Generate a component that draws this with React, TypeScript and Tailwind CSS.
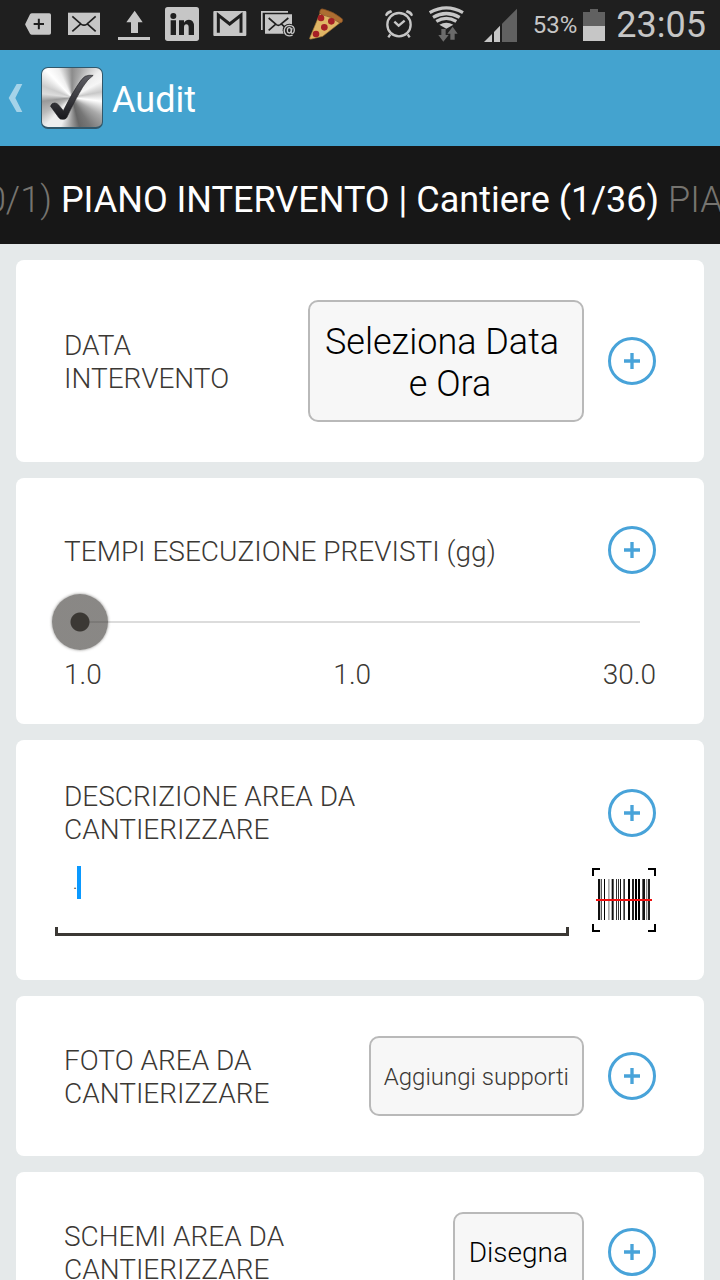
import React, { useState } from "react";

type IconProps = { x: number; children: React.ReactNode };

/* One cell of the status bar; drawings use a grid three times finer than the cell. */
function StatusIcon({ x, children }: IconProps) {
  return (
    <svg viewBox={`${x * 3} 0 144 150`} className="h-[50px] w-12 shrink-0" fill="#c6c6c6" aria-hidden="true">
      {children}
    </svg>
  );
}

function StatusBar() {
  return (
    <div className="flex h-[50px] shrink-0 items-center justify-between bg-[#1f1f1f] px-[14px] text-[#c6c6c6]">
      <div className="flex">
        <StatusIcon x={14}>
          <path d="M96 40h52q5 0 5 5v54q0 5-5 5H96q-4 0-6-3L76 75q-1-2 0-4l14-28q2-3 6-3z" />
          <path d="M101 72h31M116.500 56v32" stroke="#1f1f1f" strokeWidth="6" fill="none" />
        </StatusIcon>
        <StatusIcon x={62}>
          <path d="M204 38h96v67h-96z" />
          <path d="M217 49l27 24q8 5 16 0l27-24M217 94l27-24M287 94l-27-24" stroke="#1f1f1f" strokeWidth="5" fill="none" />
        </StatusIcon>
        <StatusIcon x={110}>
          <path d="M404 32l24 35h-14v32h-21V67h-14zM354 111h96v9h-96z" />
        </StatusIcon>
        <StatusIcon x={158}>
          <rect x="495" y="21" width="102" height="102" rx="8" />
          <circle cx="520" cy="48" r="9" fill="#1f1f1f" />
          <path d="M512 61h16v44h-16zM537 61h15v7q5-9 15-9 15 0 15 20v26h-16V82q0-9-7-9-7 0-7 9v23h-15z" fill="#1f1f1f" />
        </StatusIcon>
        <StatusIcon x={206}>
          <rect x="640" y="33" width="99" height="75" rx="3" />
          <path d="M655 98V45l34 27 34-27v53" stroke="#1f1f1f" strokeWidth="9" fill="none" />
        </StatusIcon>
        <StatusIcon x={254}>
          <path d="M783 33h81v5h-76v52h-5zM795 43h81v58h-81z" />
          <path d="M806 54l23 20q6 4 12 0l24-20M806 91l23-20M865 91l-22-20" stroke="#1f1f1f" strokeWidth="5" fill="none" />
          <circle cx="868" cy="91" r="20" fill="#1f1f1f" />
          <path d="M878 105q-10 5-19 0-8-6-6-16 3-13 16-13 14 1 14 14-1 11-7 10-4-1-2-7l2-9" stroke="#c6c6c6" strokeWidth="4" fill="none" />
          <ellipse cx="868" cy="91" rx="6" ry="8" stroke="#c6c6c6" strokeWidth="4" fill="none" />
        </StatusIcon>
        <StatusIcon x={302}>
          <path d="M963 33l60 33-55 43-34 8q-8 2-4-5z" fill="#dfb565" stroke="#a97935" strokeWidth="2" />
          <path d="M960 31q4-7 13-3 27 7 51 26 7 5 3 11-3 5-9 3-25-19-55-25-7-3-3-12z" fill="#ad6d31" stroke="#70451f" strokeWidth="2" />
          <circle cx="963" cy="54" r="10" fill="#a61f25" />
          <circle cx="994" cy="64" r="10" fill="#a61f25" />
          <circle cx="973" cy="82" r="10" fill="#a61f25" />
          <circle cx="948" cy="102" r="10" fill="#a61f25" />
        </StatusIcon>
      </div>
      <div className="flex items-center">
        <StatusIcon x={375}>
          <circle cx="1197" cy="74" r="35" fill="none" stroke="#c6c6c6" strokeWidth="7" />
          <path d="M1183 65l13 12 18-15M1171 103l-6 9M1223 103l6 9" fill="none" stroke="#c6c6c6" strokeWidth="7" />
          <path d="M1155 46q3-13 18-16l4 7q-12 4-17 12zM1239 46q-3-13-18-16l-4 7q12 4 17 12z" />
        </StatusIcon>
        <StatusIcon x={423}>
          <path d="M1289 38q50-29 100 0M1299 52q40-23 80 0M1309 64q30-18 60 0" fill="none" stroke="#c6c6c6" strokeWidth="10" />
          <path d="M1318 74q21-12 42 0l-21 12z" />
          <path d="M1324 87h13v18h9l-16 20-15-20h9zM1351 119v-18h-9l16-21 15 21h-9v18z" fill="#6b6b6b" />
        </StatusIcon>
        <StatusIcon x={471}>
          <path d="M1452 126l24-24v24zM1482 126V96l18-19v49z" />
          <path d="M1506 126V71l45-45v100z" fill="#616161" />
        </StatusIcon>
        <span className="ml-[14px] text-[24px] leading-[48px]">53%</span>
        <svg viewBox="0 0 22 32" className="mr-[11px] ml-[6px] h-8 w-[22px]" aria-hidden="true">
          <path d="M7 0h8v3h7v14H0V3h7z" fill="#616161" />
          <path d="M0 17h22v15H0z" fill="#c6c6c6" />
        </svg>
        <span className="text-[36px] leading-[48px]">23:05</span>
      </div>
    </div>
  );
}

function AppLogo() {
  return (
    <span className="relative block size-[62px] overflow-hidden rounded-[7px] border border-b-2 border-[#31576a] bg-[conic-gradient(from_0deg,#8c8c8c,#aaa_5%,#eee_13%,#f6f6f6_17%,#c8c8c8_22%,#fff_27%,#aaa_34%,#777_41%,#666_46%,#999_50%,#eee_56%,#eee_62%,#bbb_67%,#999_73%,#ddd_77%,#ccc_81%,#fff_88%,#eee_93%,#8c8c8c)]">
      <svg viewBox="124 203 184 184" className="block size-full" aria-hidden="true">
        <defs>
          <linearGradient id="tick" x1="0" y1="0" x2="0" y2="1">
            <stop offset="0" stopColor="#606066" />
            <stop offset="1" stopColor="#17171b" />
          </linearGradient>
        </defs>
        <path
          d="M149 322q4-11 14-10 7 1 12 7l14 17q23-47 43-77 15-24 25-30 11-5 25-3-18 12-33 37-25 41-49 94-4 7-12 6-9 1-13-5z"
          fill="url(#tick)"
          stroke="#222226"
          strokeWidth="2"
        />
      </svg>
    </span>
  );
}

function AddButton({ label }: { label: string }) {
  return (
    <button
      type="button"
      aria-label={label}
      className="ml-6 flex size-12 shrink-0 items-center justify-center rounded-full border-3 border-[#48a3d9]"
    >
      <svg viewBox="0 0 48 48" className="size-4" aria-hidden="true">
        <path d="M0 24h48M24 0v48" stroke="#48a3d9" strokeWidth="10" />
      </svg>
    </button>
  );
}

const cardClass = "shrink-0 rounded-lg bg-white";
const labelClass = "flex-1 pr-6 text-[28px] leading-[33px]";
const buttonClass = "shrink-0 rounded-[10px] border-2 border-[#b9b9b9] bg-[#f7f7f7] font-light whitespace-nowrap";

const bars = [
  [114, 6, "#111"], [122, 4, "#555"], [132, 3, "#000"], [144, 5, "#aaa"], [155, 6, "#111"],
  [168, 3, "#333"], [174, 3, "#333"], [180, 3, "#111"], [190, 5, "#333"], [204, 6, "#000"],
  [216, 6, "#222"], [225, 6, "#000"], [234, 6, "#000"], [247, 8, "#111"], [258, 4, "#888"], [264, 6, "#222"],
] as const;

function BarcodeIcon() {
  return (
    <svg viewBox="96 264 192 192" className="size-16" aria-hidden="true">
      <path d="M99 288V267h21M264 267h21v21M99 432v21h21M264 453h21v-21" fill="none" stroke="#000" strokeWidth="6" />
      {bars.map(([x, w, color]) => (
        <rect key={x} x={x} y="297" width={w} height="123" fill={color} />
      ))}
      <path d="M108 360h168" stroke="#f00f0f" strokeWidth="6" />
    </svg>
  );
}

export default function App() {
  const [days, setDays] = useState(1);
  const [description, setDescription] = useState(".");

  return (
    <div className="flex h-screen flex-col overflow-hidden bg-[#e5e9ea] font-[Roboto,'Noto_Sans',sans-serif]">
      <StatusBar />
      <header className="flex h-24 shrink-0 items-center bg-[#44a3cf] pl-2">
        <button type="button" aria-label="Indietro" className="flex items-center">
          <svg viewBox="24 252 45 84" className="mr-[18px] h-7 w-[15px]" aria-hidden="true">
            <path d="M50 252h17l-21 42 21 42H50l-24-42z" fill="#a5d3e9" />
          </svg>
          <AppLogo />
        </button>
        <h1 className="ml-[9px] pt-1 text-[36px] leading-[42px] text-white">Audit</h1>
      </header>
      <nav className="grid h-[98px] shrink-0 grid-cols-[1fr_auto_1fr] items-center bg-[#171717] pt-[10px] text-[36px] leading-[44px] whitespace-nowrap">
        <span className="flex justify-end overflow-hidden font-light text-[#76746f]">0/1)</span>
        <h2 className="px-[9px] text-white">PIANO INTERVENTO | Cantiere (1/36)</h2>
        <span className="overflow-hidden font-light text-[#76746f]">PIA</span>
      </nav>

      <main className="flex min-h-0 flex-1 flex-col gap-4 overflow-y-auto p-4 font-light text-[#3b3834] [scrollbar-width:none]">
        <section className={`${cardClass} flex items-center px-12 py-10`}>
          <h3 className={`${labelClass} pt-[2px]`}>DATA INTERVENTO</h3>
          <button type="button" className={`${buttonClass} w-[276px] px-2 pt-[19px] pb-[15px] text-[36px] leading-[42px] text-black`}>
            <span className="block pr-2">Seleziona Data</span>
            <span className="block pl-2">e Ora</span>
          </button>
          <AddButton label="Aggiungi nota alla data" />
        </section>

        <section className={`${cardClass} px-12 pt-12 pb-[33px]`}>
          <div className="flex items-center">
            <label htmlFor="days" className={`${labelClass} pt-[2px]`}>TEMPI ESECUZIONE PREVISTI (gg)</label>
            <AddButton label="Aggiungi nota ai tempi" />
          </div>
          <div className="-mx-3 mt-5 flex">
            <input
              id="days"
              type="range"
              min={1}
              max={30}
              value={days}
              onChange={(e) => setDays(Number(e.target.value))}
              className="h-14 w-full appearance-none bg-[linear-gradient(#dcdcdc,#dcdcdc)] bg-[length:calc(100%-56px)_2px] bg-center bg-no-repeat outline-none [&::-webkit-slider-thumb]:size-14 [&::-webkit-slider-thumb]:appearance-none [&::-webkit-slider-thumb]:rounded-full [&::-webkit-slider-thumb]:bg-[radial-gradient(circle,#3b3834_9px,#3b383499_10px)] [&::-webkit-slider-thumb]:shadow-[0_0_3px_#3b383499]"
            />
          </div>
          <div className="mt-2 flex justify-between text-[28px] leading-[33px]">
            <span>1.0</span>
            <span>{days.toFixed(1)}</span>
            <span>30.0</span>
          </div>
        </section>

        <section className={`${cardClass} pt-10 pr-12 pb-11 pl-[39px]`}>
          <div className="flex items-center pl-[9px]">
            <label htmlFor="description" className={labelClass}>DESCRIZIONE AREA DA CANTIERIZZARE</label>
            <AddButton label="Aggiungi nota alla descrizione" />
          </div>
          <div className="mt-[22px] flex gap-[23px]">
            <div className="relative h-[68px] flex-1">
              <input
                id="description"
                type="text"
                value={description}
                onChange={(e) => setDescription(e.target.value)}
                className="block h-7 w-full bg-transparent px-[18px] text-[18px] font-light caret-[#0a99ff] outline-none"
              />
              <span className="absolute -top-[2px] left-[22px] h-[33px] w-1 bg-[#0a99ff]" />
              <div className="absolute inset-x-0 bottom-0 h-[9px] border-x-3 border-b-3 border-[#3b3834]" />
            </div>
            <button type="button" aria-label="Scansiona codice a barre" className="size-16">
              <BarcodeIcon />
            </button>
          </div>
        </section>

        <section className={`${cardClass} flex items-center px-12 py-10`}>
          <h3 className={`${labelClass} pt-[2px]`}>FOTO AREA DA CANTIERIZZARE</h3>
          <button type="button" className={`${buttonClass} h-20 px-[13px] pt-[2px] text-[24px]`}>Aggiungi supporti</button>
          <AddButton label="Aggiungi nota alla foto" />
        </section>

        <section className={`${cardClass} flex items-center px-12 py-10`}>
          <h3 className={`${labelClass} pt-[2px]`}>SCHEMI AREA DA CANTIERIZZARE</h3>
          <button type="button" className={`${buttonClass} h-20 px-[14px] pt-[2px] text-[28px] text-black`}>Disegna</button>
          <AddButton label="Aggiungi nota agli schemi" />
        </section>
      </main>
    </div>
  );
}
